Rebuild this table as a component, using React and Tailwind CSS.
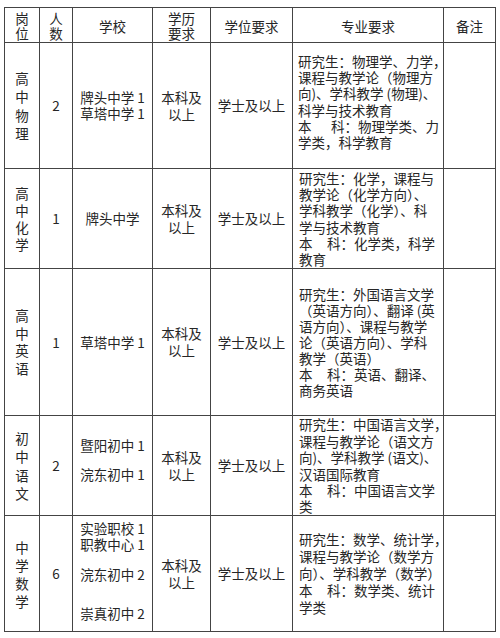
const cell = 'border border-[#444] p-0 text-center align-middle';

const Vert = ({ chars, lead }) => (
  <div className={lead}>
    {chars.map((c, i) => (
      <div key={i}>{c}</div>
    ))}
  </div>
);

const Spec = ({ lines, lead, ben }) => (
  <div className={lead}>
    {lines.map((l, i) =>
      l.startsWith('本 科') ? (
        <div key={i} className="whitespace-nowrap">
          <span className={`inline-block ${ben}`}>本</span>
          {l.slice(2)}
        </div>
      ) : (
        <div key={i} className="whitespace-nowrap">
          {l}
        </div>
      )
    )}
  </div>
);

const Degree = () => (
  <div className="leading-[17px]">
    本科及
    <br />
    以上
  </div>
);

export default function App() {
  return (
    <div className="w-[500px] h-[638px] bg-white pt-[7px] pl-[4px] font-['Noto_Sans_CJK_SC',sans-serif] text-[#262626] text-[13.5px]">
      <table className="table-fixed border-collapse w-[492px]">
        <colgroup>
          <col className="w-[35px]" />
          <col className="w-[33px]" />
          <col className="w-[80px]" />
          <col className="w-[58px]" />
          <col className="w-[82px]" />
          <col className="w-[151px]" />
          <col className="w-[52px]" />
        </colgroup>
        <tbody>
          {/* header */}
          <tr className="h-[35px]">
            <td className={cell}>
              <div className="leading-[15px] pt-[2px]">岗<br />位</div>
            </td>
            <td className={cell}>
              <div className="leading-[15px] pt-[2px]">人<br />数</div>
            </td>
            <td className={cell}>
              <div className="pt-[2px]">学校</div>
            </td>
            <td className={cell}>
              <div className="leading-[15px] pt-[2px]">学历<br />要求</div>
            </td>
            <td className={cell}>
              <div className="pt-[2px]">学位要求</div>
            </td>
            <td className={cell}>
              <div className="pt-[2px]">专业要求</div>
            </td>
            <td className={cell}>
              <div className="pt-[2px]">备注</div>
            </td>
          </tr>

          {/* 高中物理 */}
          <tr className="h-[126px]">
            <td className={cell}>
              <Vert chars={['高', '中', '物', '理']} lead="leading-[18.5px]" />
            </td>
            <td className={cell}>2</td>
            <td className={cell}>
              <div className="leading-[15.5px]">
                牌头中学 1<br />草塔中学 1
              </div>
            </td>
            <td className={cell}>
              <Degree />
            </td>
            <td className={cell}>学士及以上</td>
            <td className={`${cell} !text-left pl-[5px] pb-[8px]`}>
              <Spec
                lead="leading-[16.2px]"
                ben="w-[33px]"
                lines={[
                  '研究生：物理学、力学，',
                  '课程与教学论（物理方',
                  '向)、学科教学 (物理)、',
                  '科学与技术教育',
                  '本 科：物理学类、力',
                  '学类，科学教育',
                ]}
              />
            </td>
            <td className={cell}></td>
          </tr>

          {/* 高中化学 */}
          <tr className="h-[100px]">
            <td className={cell}>
              <Vert chars={['高', '中', '化', '学']} lead="leading-[17px]" />
            </td>
            <td className={cell}>1</td>
            <td className={cell}>牌头中学</td>
            <td className={cell}>
              <Degree />
            </td>
            <td className={cell}>学士及以上</td>
            <td className={`${cell} !text-left pl-[6px]`}>
              <Spec
                lead="leading-[16.3px]"
                ben="w-[28px]"
                lines={[
                  '研究生：化学，课程与',
                  '教学论（化学方向）、',
                  '学科教学（化学）、科',
                  '学与技术教育',
                  '本 科：化学类，科学',
                  '教育',
                ]}
              />
            </td>
            <td className={cell}></td>
          </tr>

          {/* 高中英语 */}
          <tr className="h-[147px]">
            <td className={cell}>
              <Vert chars={['高', '中', '英', '语']} lead="leading-[17.5px]" />
            </td>
            <td className={cell}>1</td>
            <td className={cell}>草塔中学 1</td>
            <td className={cell}>
              <Degree />
            </td>
            <td className={cell}>学士及以上</td>
            <td className={`${cell} !text-left pl-[6px]`}>
              <Spec
                lead="leading-[16px]"
                ben="w-[28px]"
                lines={[
                  '研究生：外国语言文学',
                  '（英语方向）、翻译 (英',
                  '语方向）、课程与教学',
                  '论（英语方向）、学科',
                  '教学（英语）',
                  '本 科：英语、翻译、',
                  '商务英语',
                ]}
              />
            </td>
            <td className={cell}></td>
          </tr>

          {/* 初中语文 */}
          <tr className="h-[100px]">
            <td className={cell}>
              <Vert chars={['初', '中', '语', '文']} lead="leading-[18.3px]" />
            </td>
            <td className={cell}>2</td>
            <td className={`${cell} !align-top pt-[22px]`}>
              <div className="leading-[15px]">暨阳初中 1</div>
              <div className="leading-[15px] mt-[14px]">浣东初中 1</div>
            </td>
            <td className={cell}>
              <Degree />
            </td>
            <td className={cell}>学士及以上</td>
            <td className={`${cell} !text-left pl-[6px]`}>
              <Spec
                lead="leading-[16.4px]"
                ben="w-[28px]"
                lines={[
                  '研究生：中国语言文学，',
                  '课程与教学论（语文方',
                  '向)、学科教学 (语文)、',
                  '汉语国际教育',
                  '本 科：中国语言文学',
                  '类',
                ]}
              />
            </td>
            <td className={cell}></td>
          </tr>

          {/* 中学数学 */}
          <tr className="h-[116px]">
            <td className={cell}>
              <Vert chars={['中', '学', '数', '学']} lead="leading-[18px]" />
            </td>
            <td className={cell}>6</td>
            <td className={`${cell} !align-top pt-[4px]`}>
              <div className="leading-[16px]">实验职校 1</div>
              <div className="leading-[16px]">职教中心 1</div>
              <div className="leading-[16px] mt-[14px]">浣东初中 2</div>
              <div className="leading-[16px] mt-[23px]">崇真初中 2</div>
            </td>
            <td className={cell}>
              <Degree />
            </td>
            <td className={cell}>学士及以上</td>
            <td className={`${cell} !text-left pl-[6px]`}>
              <Spec
                lead="leading-[17px]"
                ben="w-[28px]"
                lines={[
                  '研究生：数学、统计学，',
                  '课程与教学论（数学方',
                  '向）、学科教学（数学）',
                  '本 科：数学类、统计',
                  '学类',
                ]}
              />
            </td>
            <td className={cell}></td>
          </tr>
        </tbody>
      </table>
    </div>
  );
}
